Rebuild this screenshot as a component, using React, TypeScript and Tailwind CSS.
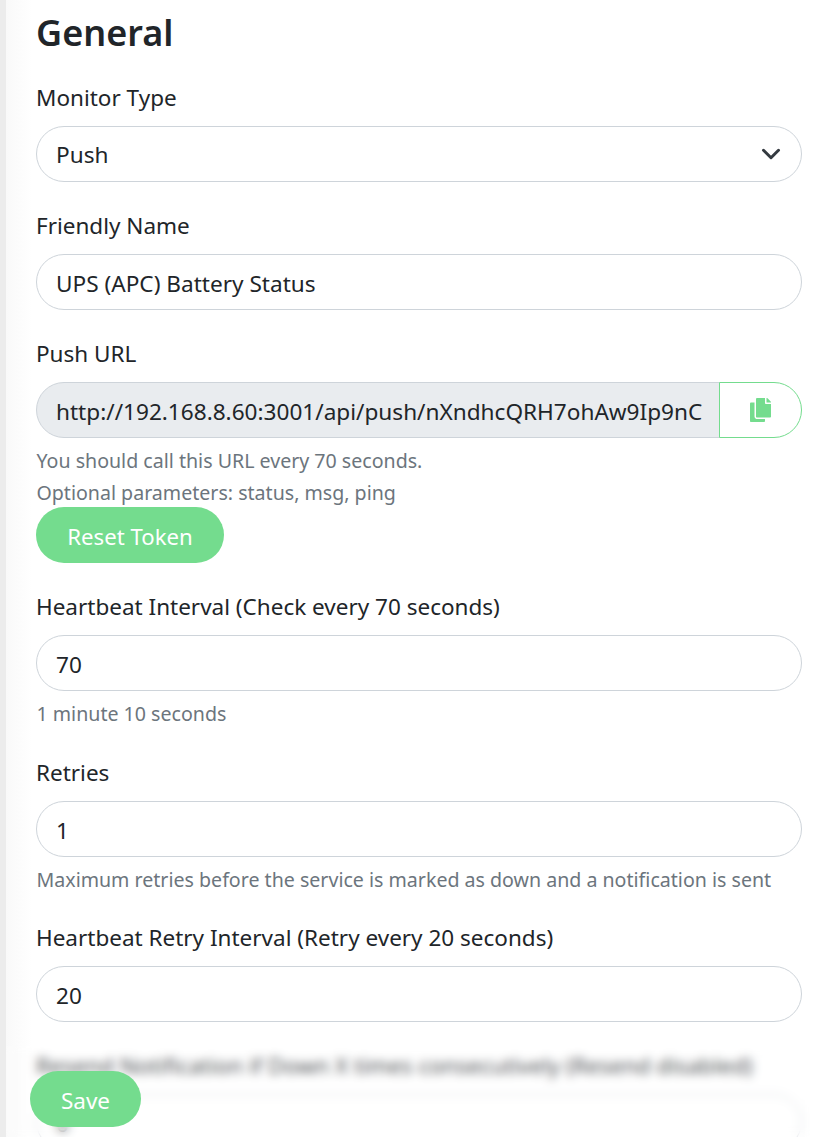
import { FaCopy } from "react-icons/fa";

const labelCls = "block h-[36px] mb-[10px] leading-[35px] text-[22.5px] text-[#212529]";
const inputCls =
  "block w-full h-[56px] rounded-[28px] border border-[#ced4da] bg-white pl-[19px] pr-[19px] pt-[2px] text-[22.6px] text-[#212529] outline-none";
const helpCls = "mt-[7px] pl-[0.5px] leading-[32px] text-[19.6px] text-[#6c757d]";

function Label({ children }: { children: React.ReactNode }) {
  return <label className={labelCls}>{children}</label>;
}

export default function App() {
  return (
    <div className="relative h-[1137px] overflow-hidden bg-[linear-gradient(to_right,#ececec_6px,#f9f9f9_6px,#ffffff_32px)] text-[#212529] [font-family:'Noto_Sans',sans-serif]">
      <div className="pl-[36px] pr-[12px]">
        <h1 className="h-[80px] pt-[9px] text-[36px] leading-[48px] font-semibold">General</h1>

        <Label>Monitor Type</Label>
        <div className="relative">
          <select defaultValue="push" className={`${inputCls} appearance-none`}>
            <option value="push">Push</option>
          </select>
          <svg viewBox="0 0 16 16" className="absolute right-[19px] top-[16px] h-[24px] w-[24px]" fill="none" stroke="#343a40" strokeWidth="2" strokeLinecap="round" strokeLinejoin="round">
            <path d="m3 5.5 5 5 5-5" />
          </svg>
        </div>

        <div className="mt-[26px]"><Label>Friendly Name</Label></div>
        <input className={inputCls} defaultValue="UPS (APC) Battery Status" />

        <div className="mt-[26px]"><Label>Push URL</Label></div>
        <div className="flex">
          <input
            className="h-[56px] min-w-0 flex-1 rounded-l-[28px] border border-[#ced4da] bg-[#e9ecef] pl-[19px] pr-[16px] pt-[2px] text-[22.6px] text-[#212529] outline-none"
            readOnly
            value="http://192.168.8.60:3001/api/push/nXndhcQRH7ohAw9Ip9nC"
          />
          <button className="-ml-px flex h-[56px] w-[83px] items-center justify-center rounded-r-[28px] border border-[#74dc8e] bg-white text-[#74dc8e]">
            <FaCopy className="h-[24px] w-[21px]" />
          </button>
        </div>
        <div className={helpCls}>
          You should call this URL every 70 seconds.
          <br />
          Optional parameters: status, msg, ping
        </div>
        <button className="-mt-[2px] block h-[56px] w-[188px] rounded-[28px] bg-[#74dc8e] pt-[3px] text-[22.2px] text-white">Reset Token</button>

        <div className="mt-[26px]"><Label>Heartbeat Interval (Check every 70 seconds)</Label></div>
        <input className={inputCls} defaultValue="70" />
        <div className={helpCls}>1 minute 10 seconds</div>

        <div className="mt-[25px]"><Label>Retries</Label></div>
        <input className={inputCls} defaultValue="1" />
        <div className={helpCls}>Maximum retries before the service is marked as down and a notification is sent</div>

        <div className="mt-[24px]"><Label>Heartbeat Retry Interval (Retry every 20 seconds)</Label></div>
        <input className={inputCls} defaultValue="20" />

        <div className="mt-[26px]"><Label>Resend Notification if Down X times consecutively (Resend disabled)</Label></div>
        <input className={inputCls} defaultValue="0" />
      </div>

      {/* save bar floats over the form and blurs what is behind it */}
      <div className="absolute bottom-0 left-[6px] right-0 h-[91px] bg-white/20 backdrop-blur-[5px]">
        <button className="absolute left-[24px] top-[25px] h-[56px] w-[111px] rounded-[28px] bg-[#74dc8e] pt-[3px] text-[22.5px] text-white">Save</button>
      </div>
    </div>
  );
}
